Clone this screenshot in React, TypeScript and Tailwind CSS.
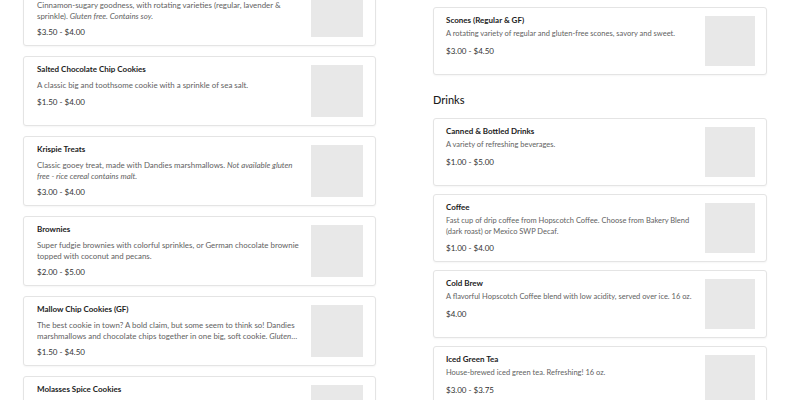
import React from "react";

type Item = {
  name: string;
  desc: string;
  note?: string;
  price: string;
  clamp?: boolean;
};

const bakery: Item[] = [
  {
    name: "Snickerdoodles (GF)",
    desc: "Cinnamon-sugary goodness, with rotating varieties (regular, lavender & sprinkle).",
    note: "Gluten free. Contains soy.",
    price: "$3.50 - $4.00",
  },
  {
    name: "Salted Chocolate Chip Cookies",
    desc: "A classic big and toothsome cookie with a sprinkle of sea salt.",
    price: "$1.50 - $4.00",
  },
  {
    name: "Krispie Treats",
    desc: "Classic gooey treat, made with Dandies marshmallows.",
    note: "Not available gluten free - rice cereal contains malt.",
    price: "$3.00 - $4.00",
  },
  {
    name: "Brownies",
    desc: "Super fudgie brownies with colorful sprinkles, or German chocolate brownie topped with coconut and pecans.",
    price: "$2.00 - $5.00",
  },
  {
    name: "Mallow Chip Cookies (GF)",
    desc: "The best cookie in town? A bold claim, but some seem to think so! Dandies marshmallows and chocolate chips together in one big, soft cookie.",
    note: "Gluten free. Contains soy.",
    price: "$1.50 - $4.50",
    clamp: true,
  },
  {
    name: "Molasses Spice Cookies",
    desc: "Chewy, warmly spiced cookies rolled in sugar.",
    price: "$1.50 - $4.00",
  },
];

const drinks: Item[] = [
  {
    name: "Canned & Bottled Drinks",
    desc: "A variety of refreshing beverages.",
    price: "$1.00 - $5.00",
  },
  {
    name: "Coffee",
    desc: "Fast cup of drip coffee from Hopscotch Coffee. Choose from Bakery Blend (dark roast) or Mexico SWP Decaf.",
    price: "$1.00 - $4.00",
  },
  {
    name: "Cold Brew",
    desc: "A flavorful Hopscotch Coffee blend with low acidity, served over ice. 16 oz.",
    price: "$4.00",
  },
  {
    name: "Iced Green Tea",
    desc: "House-brewed iced green tea. Refreshing! 16 oz.",
    price: "$3.00 - $3.75",
  },
];

const MenuCard = ({ item, wide }: { item: Item; wide?: boolean }) => (
  <div
    className={`flex justify-between rounded-[3px] border border-[#e4e4e4] bg-white shadow-[0_1px_2px_rgba(0,0,0,0.04)] ${
      wide ? "py-[8px] pl-[13px] pr-[12px]" : "py-[8px] pl-[12px] pr-[11px]"
    }`}
  >
    <div className={wide ? "w-[268px]" : "w-[246px]"}>
      <div className="text-[8px] font-bold leading-[9px] text-[#1c1c1c]">{item.name}</div>
      <p
        className={`leading-[10.5px] text-[#626262] ${wide ? "mt-[6px] text-[7.9px]" : "mt-[4px] text-[7.5px]"} ${
          item.clamp ? "line-clamp-2" : ""
        }`}
      >
        {item.desc}
        {item.note && <em> {item.note}</em>}
      </p>
      <div className="mt-[6px] text-[8px] leading-[10px] text-[#333]">{item.price}</div>
    </div>
    <div className={`shrink-0 bg-[#e8e8e8] ${wide ? "h-[52px] w-[52px]" : "h-[50px] w-[50px]"}`} />
  </div>
);

export default function App() {
  return (
    <div
      className="flex h-[400px] w-[800px] overflow-hidden bg-white"
      style={{ fontFamily: "Lato, 'Noto Sans', sans-serif" }}
    >
      {/* Bakery column */}
      <div className="ml-[23px] mt-[-24px] flex w-[353px] flex-col gap-[10px]">
        {bakery.map((it) => (
          <MenuCard key={it.name} item={it} wide />
        ))}
      </div>

      {/* Right column */}
      <div className="ml-[57px] mt-[7px] flex w-[334px] flex-col">
        <MenuCard item={{ name: "Scones (Regular & GF)", desc: "A rotating variety of regular and gluten-free scones, savory and sweet.", price: "$3.00 - $4.50" }} />
        <h2 className="mt-[18px] text-[11px] font-medium leading-[14px] text-[#1c1c1c]">Drinks</h2>
        <div className="mt-[11px] flex flex-col gap-[8px]">
          {drinks.map((it) => (
            <MenuCard key={it.name} item={it} />
          ))}
        </div>
      </div>
    </div>
  );
}
